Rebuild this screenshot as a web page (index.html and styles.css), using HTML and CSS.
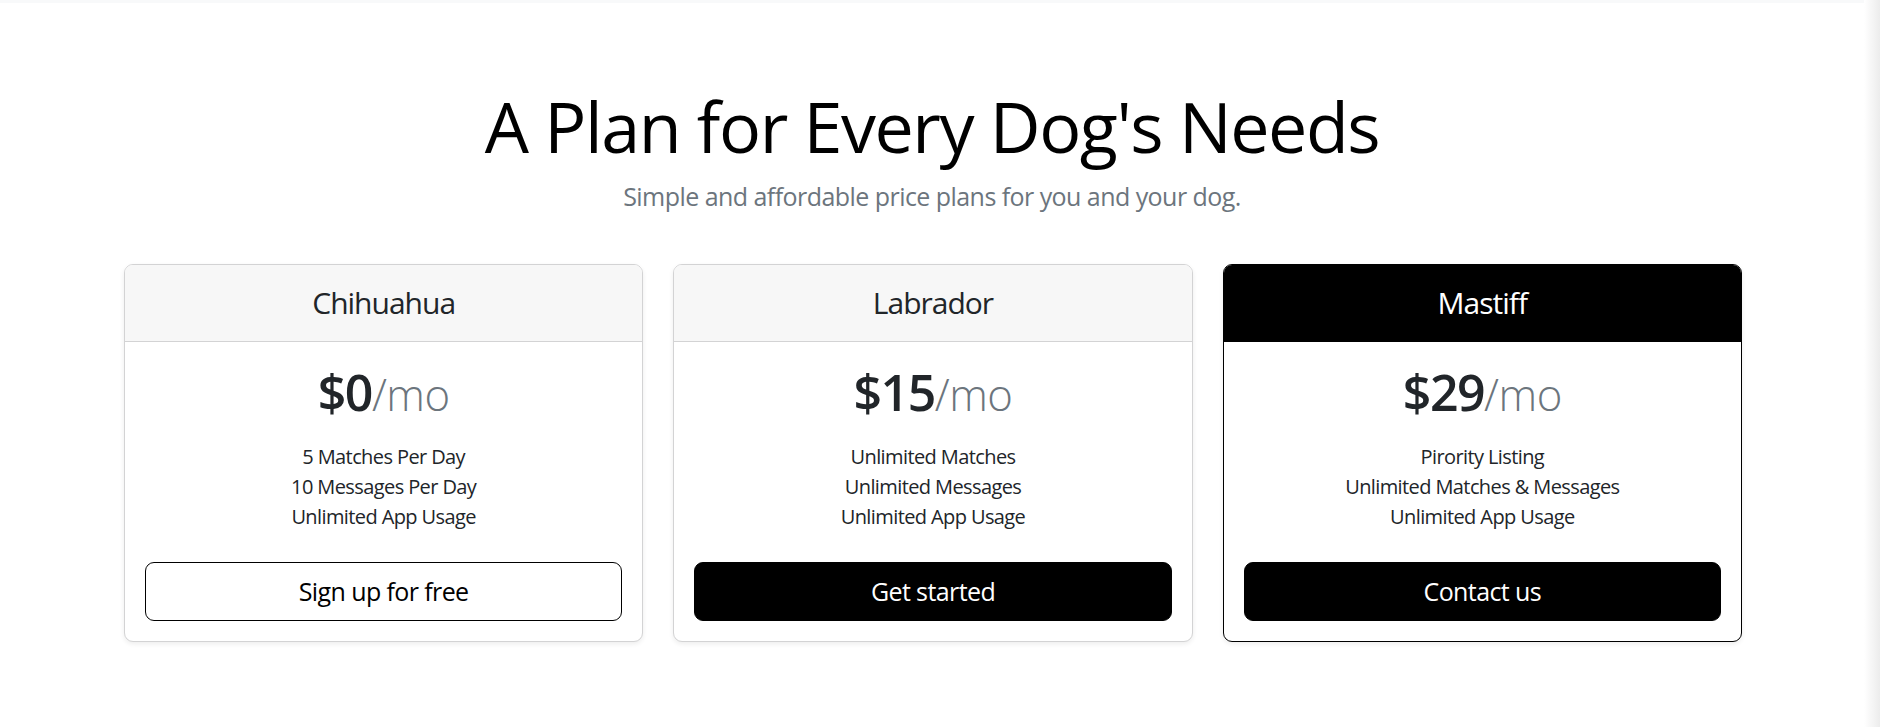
FILE: index.html
```html
<!DOCTYPE html>
<html lang="en">
<head>
<meta charset="utf-8">
<title>Pricing</title>
<link rel="stylesheet" href="styles.css">
</head>
<body>
<div class="page">
  <div class="main">
    <div class="topbar"></div>
    <header class="pricing-header">
      <h1 class="title">A Plan for Every Dog's Needs</h1>
      <p class="lead">Simple and affordable price plans for you and your dog.</p>
    </header>
    <main class="container">
      <div class="plans">
        <div class="col">
          <div class="card">
            <div class="card-header"><h4 class="plan-name">Chihuahua</h4></div>
            <div class="card-body">
              <h2 class="price"><span class="amount">$0</span><small class="per">/mo</small></h2>
              <ul class="features">
                <li>5 Matches Per Day</li>
                <li>10 Messages Per Day</li>
                <li>Unlimited App Usage</li>
              </ul>
              <button class="btn btn-outline" type="button">Sign up for free</button>
            </div>
          </div>
        </div>
        <div class="col">
          <div class="card">
            <div class="card-header"><h4 class="plan-name">Labrador</h4></div>
            <div class="card-body">
              <h2 class="price"><span class="amount">$15</span><small class="per">/mo</small></h2>
              <ul class="features">
                <li>Unlimited Matches</li>
                <li>Unlimited Messages</li>
                <li>Unlimited App Usage</li>
              </ul>
              <button class="btn btn-dark" type="button">Get started</button>
            </div>
          </div>
        </div>
        <div class="col">
          <div class="card card-dark">
            <div class="card-header"><h4 class="plan-name">Mastiff</h4></div>
            <div class="card-body">
              <h2 class="price"><span class="amount">$29</span><small class="per">/mo</small></h2>
              <ul class="features">
                <li>Pirority Listing</li>
                <li>Unlimited Matches &amp; Messages</li>
                <li>Unlimited App Usage</li>
              </ul>
              <button class="btn btn-dark" type="button">Contact us</button>
            </div>
          </div>
        </div>
      </div>
    </main>
  </div>
  <div class="edge"></div>
</div>
</body>
</html>
```

FILE: styles.css
```css
* { box-sizing: border-box; }

html, body {
  margin: 0;
  padding: 0;
  height: 100%;
  overflow: hidden;
}

body {
  font-family: "Open Sans", "Noto Sans", sans-serif;
  color: #212529;
  background: #fff;
}

.page {
  display: flex;
  height: 727px;
}

.main {
  flex: 1;
  min-width: 0;
}

.edge {
  width: 16px;
  background: linear-gradient(to right, #ffffff, #ececec);
}

.topbar {
  height: 3px;
  background: #f8f9fa;
}

.pricing-header {
  padding-top: 81px;
  text-align: center;
}

.title {
  margin: 0 0 10px;
  font-size: 70px;
  line-height: 84px;
  font-weight: 400;
  letter-spacing: -1.45px;
  color: #000;
}

.lead {
  margin: 0;
  font-size: 25px;
  line-height: 37.5px;
  letter-spacing: -0.55px;
  color: #6c757d;
}

.container {
  width: 1648px;
  margin: 48px auto 0;
  padding: 0 14px 0 16px;
}

.plans {
  display: grid;
  grid-template-columns: repeat(3, 1fr);
  column-gap: 30px;
}

.col {
  display: flex;
  flex-direction: column;
}

.card {
  border: 1px solid #d3d3d4;
  border-radius: 9px;
  background: #fff;
  box-shadow: 0 2px 5px rgba(0, 0, 0, 0.075);
  overflow: hidden;
  text-align: center;
}

.card-header {
  padding: 20px;
  background: #f7f7f7;
  border-bottom: 1px solid #d3d3d4;
}

.plan-name {
  margin: 0;
  font-size: 30px;
  line-height: 36px;
  font-weight: 400;
  letter-spacing: -1px;
  color: #212529;
}

.card-dark {
  border-color: #000;
}

.card-dark .card-header {
  background: #000;
  border-bottom-color: #000;
}

.card-dark .plan-name {
  color: #fff;
}

.card-body {
  padding: 20px;
}

.price {
  margin: 0 0 20px;
  font-size: 50px;
  line-height: 60px;
  font-weight: 400;
  color: #212529;
}

.amount {
  font-weight: 600;
  letter-spacing: -1.5px;
}

.per {
  font-size: 0.875em;
  line-height: 1;
  font-weight: 300;
  letter-spacing: -0.5px;
  color: #6c757d;
}

.features {
  list-style: none;
  margin: 0 0 30px;
  padding: 0;
  font-size: 20px;
  line-height: 30px;
  letter-spacing: -0.6px;
  color: #212529;
}

.btn {
  display: block;
  width: 100%;
  padding: 10px 20px;
  font-family: inherit;
  font-size: 25px;
  line-height: 37.5px;
  letter-spacing: -0.6px;
  border-radius: 9px;
  cursor: pointer;
}

.btn-outline {
  background: #fff;
  color: #000;
  border: 1px solid #000;
}

.btn-dark {
  background: #000;
  color: #fff;
  border: 1px solid #000;
}
```
